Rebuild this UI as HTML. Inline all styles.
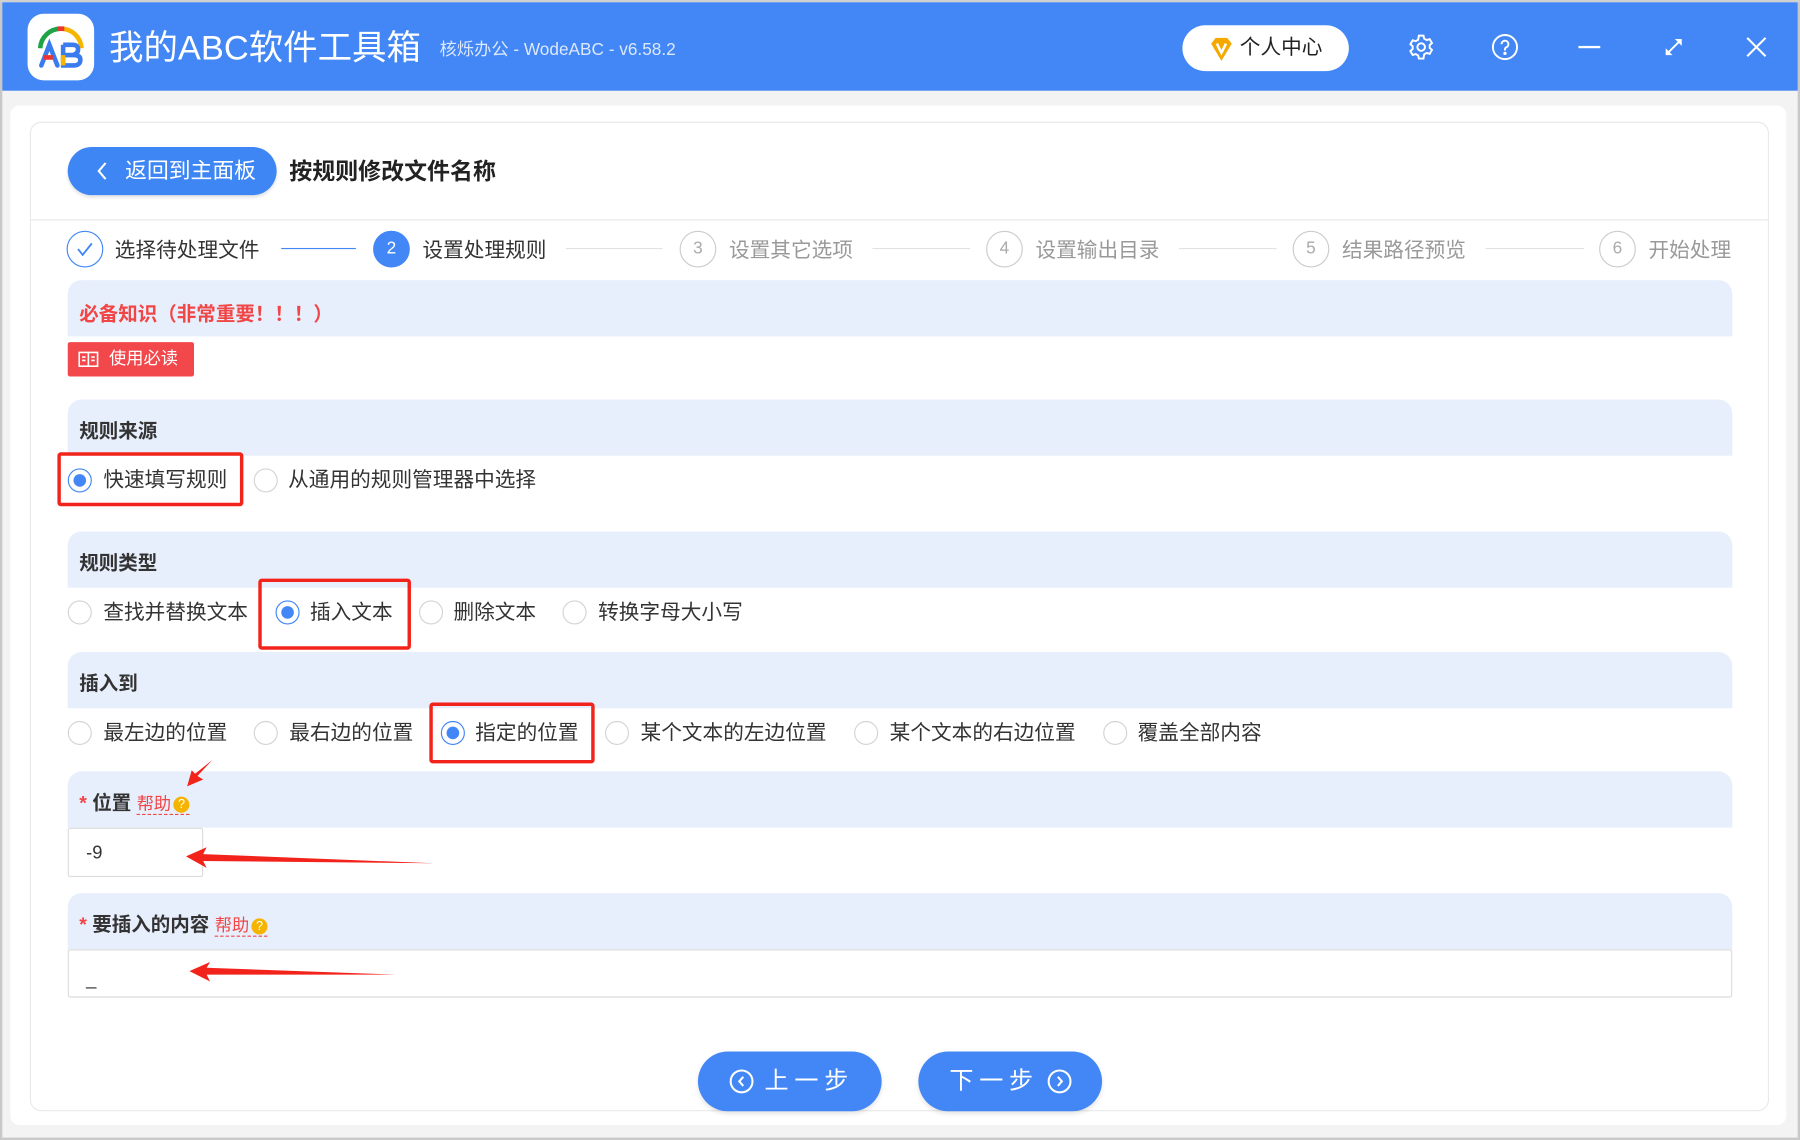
<!DOCTYPE html>
<html><head><meta charset="utf-8"><style>
*{margin:0;padding:0;box-sizing:border-box}
html,body{width:1800px;height:1140px;overflow:hidden;background:#f3f3f3}
body{font-family:"Liberation Sans","Noto Sans CJK SC",sans-serif}
#w{position:absolute;left:0;top:0;width:1568px;height:993px;transform:scale(1.14796);transform-origin:0 0;background:#f3f3f3}
.a{position:absolute}
.hd{left:2px;top:2px;width:1564px;height:77px;background:#4287f5}
.t{white-space:nowrap;line-height:1}
.band{position:absolute;left:59px;width:1450px;height:49px;background:#e8effc;border-radius:12px 12px 0 0}
.band span{position:absolute;left:10px;top:13px;font-size:17px;font-weight:bold;color:#333;white-space:nowrap}
.band span.hp{position:static;font-weight:normal;color:#f04646;font-size:15px;border-bottom:1px dashed #f04646}
.r{position:absolute;width:21px;height:21px;border:1px solid #d4d4d4;border-radius:50%;background:#fff}
.r.on{border-color:#4287f5}
.r.on:after{content:"";position:absolute;left:4px;top:4px;width:11px;height:11px;border-radius:50%;background:#4287f5}
.lb{position:absolute;font-size:18px;color:#333;white-space:nowrap;line-height:1}
.box{position:absolute;border:3px solid #f2231b;border-radius:3px}
.sc{position:absolute;width:32px;height:32px;border-radius:50%;border:1px solid #ccc;color:#aaa;font-size:15px;text-align:center;line-height:30px}
.st{position:absolute;font-size:18px;color:#999;white-space:nowrap;line-height:1;top:209px}
.ln{position:absolute;top:216px;height:1px;background:#e2e2e2}
.btn{position:absolute;top:916px;width:160px;height:52px;border-radius:26px;background:#4287f5;color:#fff;font-size:21px;box-shadow:0 2px 4px rgba(0,0,0,.12)}
.q{display:inline-block;width:14px;height:14px;border-radius:50%;background:#f5b400;color:#fff;font-size:11px;text-align:center;line-height:14px;font-style:normal;vertical-align:1px;margin-left:2px}
</style></head><body><div id="w">
<div class="a" style="left:0;top:0;width:2px;height:993px;background:#c8c8c8"></div>
<div class="a" style="left:1566px;top:0;width:2px;height:993px;background:#c8c8c8"></div>
<div class="a" style="left:0;top:0;width:1568px;height:2px;background:#d0d0d0"></div>
<div class="a" style="left:0;top:991px;width:1568px;height:2px;background:#c8c8c8"></div>
<div class="a hd"></div>
<div class="a" style="left:24px;top:12px;width:58px;height:58px;background:#fff;border-radius:14px">
<svg width="58" height="58" viewBox="0 0 58 58"><path d="M11 30 A18 18 0 0 1 29 13" stroke="#1ea446" stroke-width="4" fill="none"/><path d="M29 13 A18 18 0 0 1 47 30" stroke="#f7b500" stroke-width="4" fill="none"/><path d="M26 13 L32 13" stroke="#e33" stroke-width="4"/>
<path d="M12 45 L19 27 L26 45" stroke="#3a7bf0" stroke-width="4" fill="none" stroke-linecap="round"/><path d="M14 38 L22 38" stroke="#e33" stroke-width="4"/>
<path d="M31 27 L31 45 L40 45 Q46 45 46 40 Q46 36 40 36 L31 36 M31 27 L39 27 Q44 27 44 31 Q44 35 39 36" stroke="#3a7bf0" stroke-width="4" fill="none"/><path d="M31 36 L31 45" stroke="#f7b500" stroke-width="4"/></svg></div>
<div class="a t" style="left:95px;top:28px;font-size:30px;color:#fff">我的ABC软件工具箱</div>
<div class="a t" style="left:383px;top:36px;font-size:15px;color:#dce8fd">核烁办公 - WodeABC - v6.58.2</div>
<div class="a" style="left:1030px;top:22px;width:145px;height:40px;background:#fff;border-radius:20px"></div>
<svg class="a" style="left:1052px;top:31px" width="24" height="24" viewBox="0 0 24 24"><path d="M3 7 L7 2 L17 2 L21 7 L12 22 Z" fill="#f5a800"/><path d="M8 7 L12 15 L16 7" stroke="#fff" stroke-width="2.2" fill="none"/></svg>
<div class="a t" style="left:1080px;top:32px;font-size:18px;color:#222">个人中心</div>
<svg class="a" style="left:1226px;top:29px" width="24" height="24" viewBox="0 0 24 24" fill="none" stroke="#fff" stroke-width="1.7"><path d="M10 2h4l.6 2.6 2.2 1.3 2.6-.8 2 3.4-2 1.8v2.4l2 1.8-2 3.4-2.6-.8-2.2 1.3L14 22h-4l-.6-2.6-2.2-1.3-2.6.8-2-3.4 2-1.8v-2.4l-2-1.8 2-3.4 2.6.8 2.2-1.3z"/><circle cx="12" cy="12" r="3.3"/></svg>
<svg class="a" style="left:1299px;top:29px" width="24" height="24" viewBox="0 0 24 24" fill="none" stroke="#fff" stroke-width="1.7"><circle cx="12" cy="12" r="10.5"/><path d="M9 9.5a3 3 0 1 1 4 2.8c-.8.4-1 1-1 2v.7"/><circle cx="12" cy="17.5" r=".6" fill="#fff"/></svg>
<div class="a" style="left:1375px;top:40px;width:19px;height:2px;background:#fff"></div>
<svg class="a" style="left:1448px;top:31px" width="20" height="20" viewBox="0 0 20 20" fill="#fff" stroke="#fff" stroke-width="1.6"><path d="M5 15 L15 5"/><path d="M11 3 L17 3 L17 9 Z" stroke="none"/><path d="M3 11 L3 17 L9 17 Z" stroke="none"/></svg>
<svg class="a" style="left:1521px;top:32px" width="18" height="18" viewBox="0 0 18 18" stroke="#fff" stroke-width="1.8"><path d="M1 1L17 17M17 1L1 17"/></svg>

<div class="a" style="left:9px;top:92px;width:1547px;height:888px;background:#fff;border-radius:8px"></div>
<div class="a" style="left:26px;top:106px;width:1515px;height:862px;border:1px solid #e9e9e9;border-radius:10px"></div>
<div class="a" style="left:26px;top:191px;width:1515px;height:1px;background:#e9e9e9"></div>
<div class="a" style="left:59px;top:128px;width:182px;height:42px;border-radius:21px;background:#3f86f5;box-shadow:0 2px 3px rgba(0,0,0,.12)"></div>
<svg class="a" style="left:83px;top:140px" width="12" height="18" viewBox="0 0 12 18" stroke="#fff" stroke-width="1.8" fill="none"><path d="M9 2 L3 9 L9 16"/></svg>
<div class="a t" style="left:109px;top:140px;font-size:19px;color:#fff">返回到主面板</div>
<div class="a t" style="left:252px;top:140px;font-size:20px;font-weight:bold;color:#222">按规则修改文件名称</div>

<div class="sc" style="left:58px;top:201px;border-color:#4287f5"><svg width="30" height="30" viewBox="0 0 30 30" fill="none" stroke="#4287f5" stroke-width="1.6"><path d="M9 15 L13 20 L21 10"/></svg></div>
<div class="st" style="left:100px;color:#333">选择待处理文件</div>
<div class="ln" style="left:245px;width:65px;background:#4287f5"></div>
<div class="sc" style="left:325px;top:201px;background:#4287f5;border-color:#4287f5;color:#fff">2</div>
<div class="st" style="left:368px;color:#333">设置处理规则</div>
<div class="ln" style="left:493px;width:84px"></div>
<div class="sc" style="left:592px;top:201px">3</div><div class="st" style="left:635px">设置其它选项</div>
<div class="ln" style="left:760px;width:85px"></div>
<div class="sc" style="left:859px;top:201px">4</div><div class="st" style="left:902px">设置输出目录</div>
<div class="ln" style="left:1027px;width:85px"></div>
<div class="sc" style="left:1126px;top:201px">5</div><div class="st" style="left:1169px">结果路径预览</div>
<div class="ln" style="left:1294px;width:86px"></div>
<div class="sc" style="left:1393px;top:201px">6</div><div class="st" style="left:1436px">开始处理</div>

<div class="band" style="top:244px"><span style="color:#f04646;top:15px">必备知识（非常重要！！！）</span></div>
<div class="a" style="left:59px;top:298px;width:110px;height:30px;background:#f2484c;border-radius:2px"></div>
<svg class="a" style="left:68px;top:306px" width="18" height="14" viewBox="0 0 18 14" fill="none" stroke="#fff" stroke-width="1.4"><rect x="1" y="1" width="16" height="12"/><path d="M9 1V13M3.5 5H6.5M3.5 8H6.5M11.5 5H14.5M11.5 8H14.5"/></svg>
<div class="a t" style="left:95px;top:305px;font-size:15px;color:#fff">使用必读</div>

<div class="band" style="top:348px"><span>规则来源</span></div>
<div class="r on" style="left:59px;top:408px"></div><div class="lb" style="left:90px;top:409px">快速填写规则</div>
<div class="r" style="left:221px;top:408px"></div><div class="lb" style="left:251px;top:409px">从通用的规则管理器中选择</div>
<div class="box" style="left:50px;top:394px;width:162px;height:47px"></div>

<div class="band" style="top:463px"><span>规则类型</span></div>
<div class="r" style="left:59px;top:523px"></div><div class="lb" style="left:90px;top:524px">查找并替换文本</div>
<div class="r on" style="left:240px;top:523px"></div><div class="lb" style="left:270px;top:524px">插入文本</div>
<div class="r" style="left:365px;top:523px"></div><div class="lb" style="left:395px;top:524px">删除文本</div>
<div class="r" style="left:490px;top:523px"></div><div class="lb" style="left:521px;top:524px">转换字母大小写</div>
<div class="box" style="left:225px;top:504px;width:133px;height:62px"></div>

<div class="band" style="top:568px"><span>插入到</span></div>
<div class="r" style="left:59px;top:628px"></div><div class="lb" style="left:90px;top:629px">最左边的位置</div>
<div class="r" style="left:221px;top:628px"></div><div class="lb" style="left:252px;top:629px">最右边的位置</div>
<div class="r on" style="left:384px;top:628px"></div><div class="lb" style="left:414px;top:629px">指定的位置</div>
<div class="r" style="left:527px;top:628px"></div><div class="lb" style="left:558px;top:629px">某个文本的左边位置</div>
<div class="r" style="left:744px;top:628px"></div><div class="lb" style="left:775px;top:629px">某个文本的右边位置</div>
<div class="r" style="left:961px;top:628px"></div><div class="lb" style="left:991px;top:629px">覆盖全部内容</div>
<div class="box" style="left:374px;top:612px;width:144px;height:53px"></div>

<div class="band" style="top:672px"><span><b style="color:#f04646">* </b>位置 <span class="hp">帮助<i class="q">?</i></span></span></div>
<div class="a" style="left:59px;top:721px;width:118px;height:43px;border:1px solid #dcdcdc;border-radius:2px"></div>
<div class="a t" style="left:75px;top:736px;font-size:16px;color:#333">-9</div>

<div class="band" style="top:778px"><span><b style="color:#f04646">* </b>要插入的内容 <span class="hp">帮助<i class="q">?</i></span></span></div>
<div class="a" style="left:59px;top:827px;width:1450px;height:42px;border:1px solid #dcdcdc;border-radius:2px"></div>
<div class="a t" style="left:75px;top:846px;font-size:16px;color:#333">_</div>

<svg class="a" style="left:0;top:0" width="1568" height="993"><g fill="#f2231b">
<path d="M185 662 L172 676 L177 679 L163 685 L167 671 L170 674 Z"/>
<path d="M162 746 L180 738 L177 744 L378 752 L177 750 L180 756 Z"/>
<path d="M165 846 L183 838 L180 843 L345 849 L180 849 L183 855 Z"/></g></svg>

<div class="btn" style="left:608px"><svg class="a" style="left:27px;top:15px" width="22" height="22" viewBox="0 0 22 22" fill="none" stroke="#fff" stroke-width="1.8"><circle cx="11" cy="11" r="9.5"/><path d="M12.5 7 L9 11 L12.5 15"/></svg><span class="a t" style="left:58px;top:15px;letter-spacing:5px">上一步</span></div>
<div class="btn" style="left:800px"><span class="a t" style="left:27px;top:15px;letter-spacing:5px">下一步</span><svg class="a" style="left:112px;top:15px" width="22" height="22" viewBox="0 0 22 22" fill="none" stroke="#fff" stroke-width="1.8"><circle cx="11" cy="11" r="9.5"/><path d="M9.5 7 L13 11 L9.5 15"/></svg></div>
</div></body></html>
